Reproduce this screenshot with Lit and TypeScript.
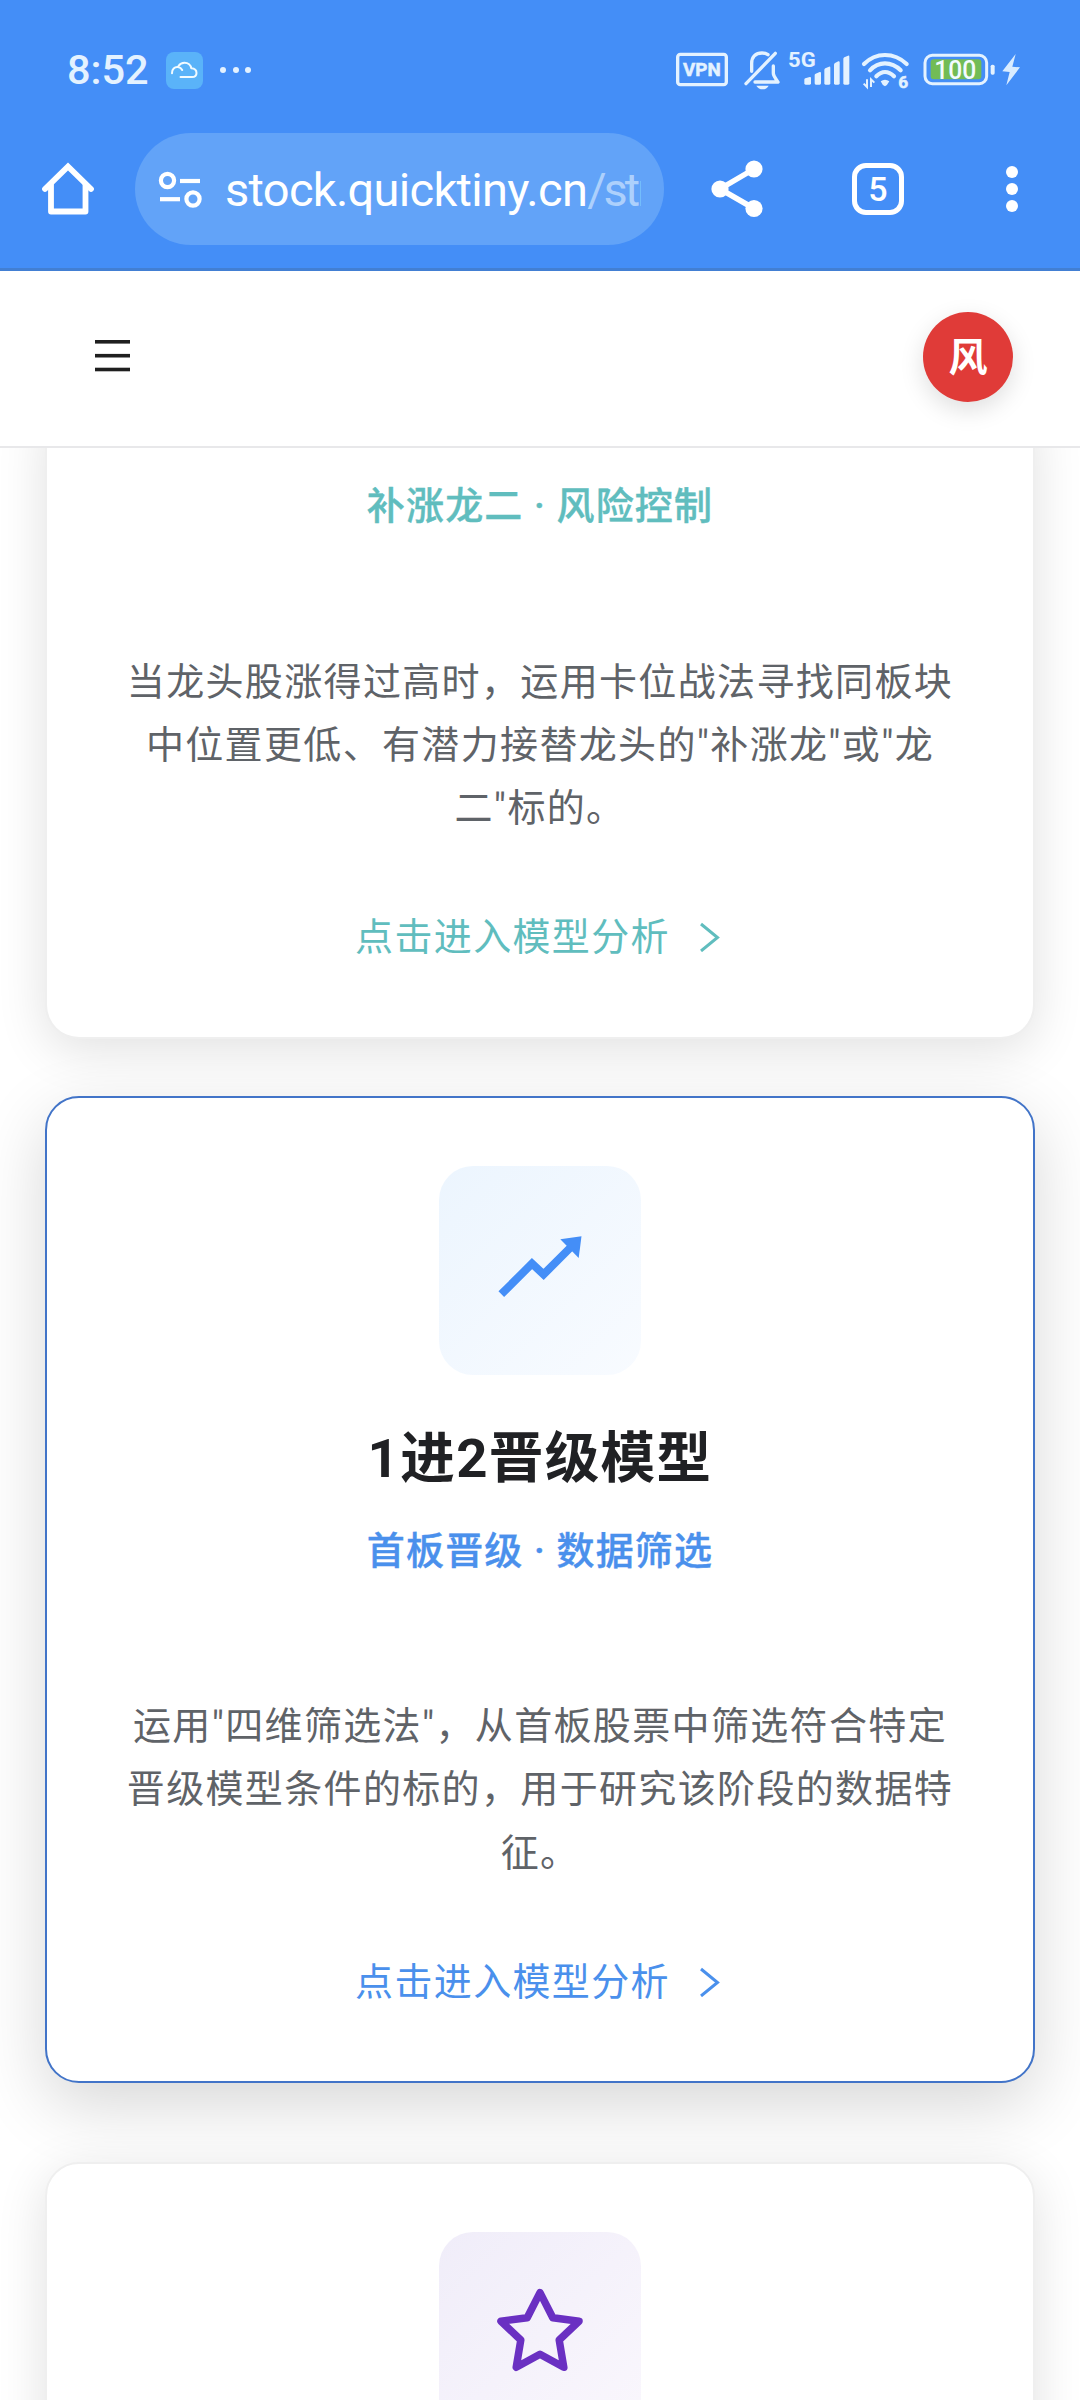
import { LitElement, html, css, nothing, type TemplateResult } from "lit";
import { customElement, property } from "lit/decorators.js";

const cloudIcon = html`<svg width="37" height="37" viewBox="0 0 37 37" fill="none" stroke="#f2fbff" stroke-width="2" stroke-linecap="round" stroke-linejoin="round">
  <path d="M6 21.2C5.8 17.2 8.6 14.6 12 15c2 .3 3.4 1.300 4.200 3" />
  <path d="M12.500 14c1.400-2.200 3.600-3.300 6.100-3.300 3.400 0 6.200 2.200 6.700 5.600 3 .2 5.200 2.100 5.200 4.700 0 2.500-1.900 4.100-4.500 4.100H14.500" />
</svg>`;

const vpnIcon = html`<svg width="52" height="42" viewBox="21 18 156 126">
  <rect x="26" y="31" width="146" height="91" rx="8" fill="none" stroke="#e4f2ff" stroke-width="10" />
  <text x="42" y="97" font-size="57" font-weight="700" textLength="113" lengthAdjust="spacingAndGlyphs" fill="#e4f2ff" stroke="#e4f2ff" stroke-width="1.500">VPN</text>
</svg>`;

const muteIcon = html`<svg width="36" height="42" viewBox="224 18 108 126" fill="none" stroke="#e4f2ff" stroke-width="10" stroke-linecap="round" stroke-linejoin="round">
  <path d="M318 28L230 119" />
  <path d="M247 82V58c0-19 12-31 31-31 8 0 14 2 18 5" />
  <path d="M312 66V88c0 9 8 16 14 26H257" />
  <path d="M261 125h37c-4 7-10 11-18 11s-15-4-19-11z" fill="#e4f2ff" stroke="none" />
</svg>`;

const signalIcon = html`<svg width="62" height="42" viewBox="356 18 186 126" fill="#e4f2ff">
  <text x="356" y="70" font-size="61" font-weight="700" textLength="83" lengthAdjust="spacingAndGlyphs">5G</text>
  <path d="M405 107q0-3 3-4l13-4q4-1 4 3v16q0 4-4 4h-12q-4 0-4-4z" />
  <path d="M436 93q0-3 3-4l12-5q4-1 4 3v31q0 4-4 4h-11q-4 0-4-4z" />
  <path d="M465 78q0-3 3-5l11-5q4-1 4 3v47q0 4-4 4h-10q-4 0-4-4z" />
  <path d="M494 62q0-3 3-5l10-5q4-1 4 3v63q0 4-4 4h-9q-4 0-4-4z" />
  <path d="M522 45q0-3 3-5l11-5q4-1 4 3v80q0 4-4 4h-10q-4 0-4-4z" />
</svg>`;

const wifiIcon = html`<svg width="48" height="42" viewBox="578 18 144 126" fill="none" stroke="#e4f2ff" stroke-linecap="round">
  <path d="M584 60C603 41 624 33 647 33s45 8 65 27" stroke-width="12.500" />
  <path d="M602 79C615 65 630 58 647 58s33 7 47 21" stroke-width="12.500" />
  <path d="M621 97c8-8 16-13 26-13s19 5 27 13" stroke-width="12.500" />
  <path d="M634 112q13-9 26 0q-6 12-13 15q-8-3-13-15z" fill="#e4f2ff" stroke="none" />
  <path d="M593 106v23l-10-10M605 129v-23l10 10" stroke-width="6" stroke-linecap="butt" />
  <text x="687" y="132" font-size="52" font-weight="700" fill="#e4f2ff" stroke="#e4f2ff" stroke-width="1.500">6</text>
</svg>`;

const batteryIcon = html`<svg width="72" height="42" viewBox="760 18 216 126">
  <rect x="766" y="34" width="185" height="85" rx="22" fill="none" stroke="#e4f2ff" stroke-width="9" />
  <rect x="783" y="46" width="152" height="60" rx="9" fill="#72bc55" />
  <rect x="963" y="62" width="12" height="30" rx="5" fill="#e4f2ff" />
  <text x="794" y="105" font-size="76" font-weight="500" textLength="126" lengthAdjust="spacingAndGlyphs" fill="#f2fbff">100</text>
</svg>`;

const boltIcon = html`<svg width="18" height="42" viewBox="996 18 54 126">
  <path d="M1037 30L997 82l22 2-10 40 41-54-23-2z" fill="#d9ecff" />
</svg>`;

const homeIcon = html`<svg width="52" height="54" viewBox="42 162 52 54" fill="none" stroke="#fff" stroke-width="5.800" stroke-linecap="round" stroke-linejoin="round">
  <path d="M45 189L68 166.500 91 189" stroke-linejoin="miter" />
  <path d="M51 185v26.500h34.500V185" />
</svg>`;

const tuneIcon = html`<svg width="44" height="38" viewBox="158 170 44 38" fill="none" stroke="#fff" stroke-width="4.200">
  <circle cx="167.500" cy="179.500" r="6.600" /><path d="M180 180h20" />
  <circle cx="193" cy="198" r="6.600" /><path d="M160 198.200h20" />
</svg>`;

const shareIcon = html`<svg width="52" height="58" viewBox="711 160 52 58">
  <path d="M754 169L720 189l34 19.500" fill="none" stroke="#fff" stroke-width="5.500" />
  <circle cx="754" cy="169" r="8.600" fill="#fff" /><circle cx="720" cy="189" r="8.600" fill="#fff" /><circle cx="754" cy="208.500" r="8.600" fill="#fff" />
</svg>`;

const moreIcon = html`<svg width="14" height="50" viewBox="0 0 14 50" fill="#fff">
  <circle cx="7" cy="8" r="6" /><circle cx="7" cy="25" r="6" /><circle cx="7" cy="42" r="6" />
</svg>`;

const menuIcon = html`<svg width="35" height="32" viewBox="0 0 35 32" fill="#1f1f1f">
  <rect y="0" width="35" height="3.600" /><rect y="13.900" width="35" height="3.600" /><rect y="27.700" width="35" height="3.600" />
</svg>`;

const trendIcon = html`<svg class="trend" width="84" height="64" viewBox="498 1233 84 64">
  <path d="M501.300 1293.200L532 1262.600l11.600 10.800L571 1246" fill="none" stroke="#448ef7" stroke-width="8" />
  <path d="M581.500 1235.300L560.300 1238.300l18.400 18.800z" fill="#448ef7" />
</svg>`;

const starIcon = html`<svg class="star" width="88" height="84" viewBox="496 2286 88 84" fill="none" stroke="#6a30c2" stroke-width="7.500" stroke-linejoin="round">
  <path d="M540 2290.600L552.800 2315.700 579 2319.200 559.200 2338 563.800 2365.300 540 2352.300 516.200 2365.300 520.800 2338 501 2319.200 527.200 2315.700z" />
</svg>`;

@customElement("status-bar")
export class StatusBar extends LitElement {
  static styles = css`
    :host { display: block; font-family: Roboto, "Liberation Sans", sans-serif; color: #e4f2ff; }
    svg { display: block; flex: none; overflow: visible; font-family: Roboto, "Liberation Sans", sans-serif; }
    .bar { display: flex; align-items: center; height: 92px; padding: 48px 60px 0 67px; box-sizing: border-box; }
    .time { width: 99px; font-size: 41.500px; line-height: 44px; font-weight: 500; letter-spacing: 0; }
    .app { width: 37px; height: 37px; border-radius: 8px; background: #5ab3f9; }
    .dots { display: flex; gap: 6.500px; margin-left: 17px; }
    .dot { width: 6px; height: 6px; border-radius: 50%; background: #e4f2ff; }
    .right { display: flex; margin-left: auto; align-items: center; padding-top: 2px; }
    .vpn { margin-right: 16px; }
    .mute { margin-right: 8px; }
    .signal { margin-right: 12px; }
    .wifi { margin-right: 13px; }
    .battery { margin-right: 7px; }
  `;
  render() {
    return html`<div class="bar">
      <span class="time">8:52</span>
      <span class="app">${cloudIcon}</span>
      <span class="dots"><i class="dot"></i><i class="dot"></i><i class="dot"></i></span>
      <span class="right">
        <span class="vpn">${vpnIcon}</span><span class="mute">${muteIcon}</span>
        <span class="signal">${signalIcon}</span><span class="wifi">${wifiIcon}</span>
        <span class="battery">${batteryIcon}</span><span>${boltIcon}</span>
      </span>
    </div>`;
  }
}

@customElement("browser-toolbar")
export class BrowserToolbar extends LitElement {
  static styles = css`
    :host { display: block; font-family: Roboto, "Liberation Sans", sans-serif; color: #fff; }
    svg { display: block; flex: none; }
    .bar { display: flex; align-items: center; height: 112px; padding-left: 42px; }
    .pill { display: flex; align-items: center; width: 529px; height: 112px; margin-left: 41px; padding: 2px 23px 0; box-sizing: border-box; border-radius: 56px; background: #62a3f8; }
    .url { width: 416px; margin-left: 23px; overflow: hidden; white-space: nowrap; font-size: 47px; line-height: 60px; letter-spacing: -0.700px; }
    .path { color: #add0fc; letter-spacing: -3px; }
    .share { margin-left: 47px; }
    .tabs { display: flex; align-items: center; justify-content: center; width: 52px; height: 52px; margin-left: 89px; box-sizing: border-box; border: 5.500px solid #fff; border-radius: 14px; font-size: 34px; line-height: 40px; font-weight: 500; }
    .more { margin-left: 101px; }
  `;
  render() {
    return html`<div class="bar">
      ${homeIcon}
      <div class="pill">${tuneIcon}<div class="url">stock.quicktiny.cn<span class="path">/str</span></div></div>
      <span class="share">${shareIcon}</span>
      <span class="tabs">5</span>
      <span class="more">${moreIcon}</span>
    </div>`;
  }
}

@customElement("model-card")
export class ModelCard extends LitElement {
  @property() tone = "blue";
  @property() heading = "";
  @property() tagline = "";
  @property() action = "";
  @property({ attribute: false }) icon?: TemplateResult;
  @property({ attribute: false }) lines: string[] = [];
  @property({ type: Boolean }) active = false;
  @property({ type: Boolean }) continued = false;

  static styles = css`
    :host { display: block; }
    svg { display: block; }
    .card { display: flex; flex-direction: column; align-items: center; box-sizing: border-box; padding: 68px 0 72px; border: 2px solid #efefef; border-radius: 34px; background: #fff; box-shadow: 0 11px 50px rgba(0, 0, 0, 0.12); background-clip: padding-box; text-align: center; white-space: nowrap; }
    .active { border-color: #4274c8; box-shadow: 0 22px 68px rgba(0, 0, 0, 0.16); }
    .continued { border-top: 0; border-radius: 0 0 34px 34px; padding-top: 68px; }
    .tile { display: flex; align-items: center; justify-content: center; width: 202px; height: 209px; border-radius: 34px; }
    .tile-blue { background: linear-gradient(135deg, #ecf5fe, #f8fbff); }
    .tile-purple { background: linear-gradient(135deg, #f0edf9, #faf7fd); }
    .trend { margin-bottom: 9px; }
    .star { margin-bottom: 14px; }
    .heading { margin: 43px 0 23px; font-size: 54.500px; line-height: 80px; font-weight: 700; letter-spacing: 1.400px; color: #202124; }
    .tagline { margin-bottom: 114.500px; font-size: 38px; line-height: 60px; font-weight: 500; letter-spacing: 1.150px; -webkit-text-stroke: 0.400px currentColor; }
    .description { margin-bottom: 63.500px; font-size: 38px; line-height: 63.200px; letter-spacing: 1.350px; color: #5f6368; }
    .line { display: block; }
    .action { display: flex; align-items: center; height: 60px; gap: 29px; margin-bottom: 1px; padding-right: 4px; font-size: 38px; letter-spacing: 1.350px; }
    .chevron { margin-top: 7px; }
    .blue { color: #4a90ec; }
    .teal { color: #60bdbe; }
  `;
  render() {
    const cls = `card ${this.active ? "active" : ""} ${this.continued ? "continued" : ""}`;
    return html`<article class=${cls}>
      ${this.icon ? html`<div class="tile tile-${this.tone}">${this.icon}</div>` : nothing}
      ${this.heading ? html`<div class="heading">${this.heading}</div>` : nothing}
      ${this.tagline ? html`<div class="tagline ${this.tone}">${this.tagline}</div>` : nothing}
      ${this.lines.length ? html`<div class="description">${this.lines.map((l) => html`<span class="line">${l}</span>`)}</div>` : nothing}
      ${this.action
        ? html`<div class="action ${this.tone}"><span>${this.action}</span>
            <svg class="chevron" width="22" height="30" viewBox="0 0 22 30" fill="none" stroke="currentColor" stroke-width="3"><path d="M2 2L18.500 15.500 2 29" /></svg></div>`
        : nothing}
    </article>`;
  }
}

@customElement("app-root")
export class AppRoot extends LitElement {
  static styles = css`
    :host { display: block; font-family: Roboto, "Noto Sans CJK SC", sans-serif; }
    svg { display: block; }
    .screen { display: flex; flex-direction: column; width: 1080px; height: 2400px; overflow: hidden; background: #fff; }
    .chrome { flex: none; height: 271px; box-sizing: border-box; background: #448ef7; border-bottom: 3px solid #427fd3; }
    .toolbar { margin-top: 41px; }
    .header { flex: none; display: flex; align-items: center; justify-content: space-between; height: 177px; box-sizing: border-box; padding: 0 67px 4px 95px; border-bottom: 2px solid #e8e8ea; }
    .menu { padding-bottom: 2px; }
    .avatar { display: flex; align-items: center; justify-content: center; width: 90px; height: 90px; padding-top: 2px; box-sizing: border-box; border-radius: 50%; background: #e03b38; color: #fff; font-size: 39px; font-weight: 700; line-height: 60px; box-shadow: 0 8px 24px rgba(0, 0, 0, 0.13); }
    .content { flex: 1; min-height: 0; overflow: hidden; padding: 0 45px; }
    .first { margin-top: -40px; }
    .second { margin-top: 57px; }
    .third { margin-top: 79px; }
  `;
  render() {
    return html`<div class="screen">
      <div class="chrome"><status-bar></status-bar><browser-toolbar class="toolbar"></browser-toolbar></div>
      <header class="header"><span class="menu">${menuIcon}</span><span class="avatar">风</span></header>
      <main class="content">
        <model-card class="first" tone="teal" continued tagline="补涨龙二 · 风险控制" action="点击进入模型分析"
          .lines=${["当龙头股涨得过高时，运用卡位战法寻找同板块", "中位置更低、有潜力接替龙头的\"补涨龙\"或\"龙", "二\"标的。"]}></model-card>
        <model-card class="second" tone="blue" active .icon=${trendIcon} heading="1进2晋级模型" tagline="首板晋级 · 数据筛选" action="点击进入模型分析"
          .lines=${["运用\"四维筛选法\"，从首板股票中筛选符合特定", "晋级模型条件的标的，用于研究该阶段的数据特", "征。"]}></model-card>
        <model-card class="third" tone="purple" .icon=${starIcon}></model-card>
      </main>
    </div>`;
  }
}
